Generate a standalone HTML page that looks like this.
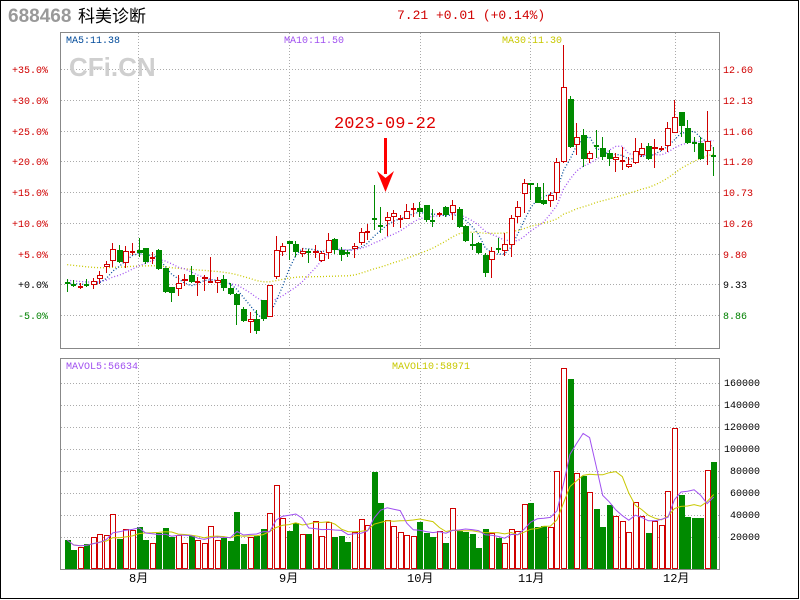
<!DOCTYPE html>
<html><head><meta charset="utf-8"><style>
html,body{margin:0;padding:0;background:#fff;}
#w{position:relative;width:800px;height:600px;overflow:hidden;}
svg{position:absolute;left:0;top:0;}
text{font-family:"Liberation Mono",monospace;}
</style></head><body><div id="w">
<svg id="s" width="800" height="600" xmlns="http://www.w3.org/2000/svg">
<rect x="0.5" y="0.5" width="798" height="598" fill="#fff" stroke="#000"/>
<text x="8" y="22" font-size="19" font-weight="bold" fill="#999" style="font-family:'Liberation Sans',sans-serif">688468</text>
<text x="78" y="22" font-size="17" fill="#000" style="font-family:'Liberation Sans','Noto Sans CJK SC',sans-serif">科美诊断</text>
<text x="397" y="19" font-size="13" fill="#d00000">7.21 +0.01 (+0.14%)</text>
<g id="grid"></g>
<rect x="60.5" y="32.5" width="659" height="316" fill="none" stroke="#888"/>
<rect x="60.5" y="358.5" width="659" height="211" fill="none" stroke="#888"/>
<text x="69" y="76" font-size="26" font-weight="bold" fill="#cfcfcf" style="font-family:'Liberation Sans',sans-serif">CFi.CN</text>
<text x="66" y="43" font-size="10" fill="#004a9a">MA5:11.38</text>
<text x="284" y="43" font-size="10" fill="#a050f0">MA10:11.50</text>
<text x="502" y="43" font-size="10" fill="#c8c800">MA30:11.30</text>
<text x="66" y="369" font-size="10" fill="#a050f0">MAVOL5:56634</text>
<text x="392" y="369" font-size="10" fill="#c8c800">MAVOL10:58971</text>
<g id="lab" font-size="10"></g>
<g id="ma"></g>
<g id="cd"></g>
<g id="vol"></g>
<text x="334" y="128" font-size="17" fill="#e00000">2023-09-22</text>
<rect x="384" y="138" width="3" height="36" fill="#f00"/>
<polygon points="377,171 385.5,192 394,171 385.5,178" fill="#f00"/>
<g font-size="12" fill="#000" style="font-family:'Liberation Sans','Noto Sans CJK SC',sans-serif">
<text x="129" y="582">8月</text><text x="279" y="582">9月</text><text x="407" y="582">10月</text><text x="518" y="582">11月</text><text x="663" y="582">12月</text>
</g>
</svg></div>
<script>
function add(g,h){document.getElementById(g).innerHTML+=h;}
var g="",hy=[69,100,131,161,192,223,254,284,315],vy=[383,405,427,449,471,493,515,537],vx=[138,289,420,530,675];
hy.forEach(function(y){g+='<line x1="61" x2="719" y1="'+(y+.5)+'" y2="'+(y+.5)+'" stroke="#aaa" stroke-dasharray="1,2"/>';});
vy.forEach(function(y){g+='<line x1="61" x2="719" y1="'+(y+.5)+'" y2="'+(y+.5)+'" stroke="#aaa" stroke-dasharray="1,2"/>';});
vx.forEach(function(x){g+='<line x1="'+(x+.5)+'" x2="'+(x+.5)+'" y1="33" y2="348" stroke="#aaa" stroke-dasharray="1,2"/><line x1="'+(x+.5)+'" x2="'+(x+.5)+'" y1="359" y2="569" stroke="#aaa" stroke-dasharray="1,2"/>';});
add("grid",g);
var L="",pl=["+35.0%","+30.0%","+25.0%","+20.0%","+15.0%","+10.0%","+5.0%","+0.0%","-5.0%"],pr=["12.60","12.13","11.66","11.20","10.73","10.26","9.80","9.33","8.86"];
hy.forEach(function(y,i){var c=i<7?"#d00000":(i==7?"#000":"#008000");
L+='<text x="48" y="'+(y+4)+'" text-anchor="end" fill="'+c+'">'+pl[i]+'</text><text x="723" y="'+(y+4)+'" fill="'+c+'">'+pr[i]+'</text>';});
var vl=["160000","140000","120000","100000","80000","60000","40000","20000"];
vy.forEach(function(y,i){L+='<text x="760" y="'+(y+3)+'" text-anchor="end" fill="#000">'+vl[i]+'</text>';});
add("lab",L);
var A=[["g",246,250,238,275],["g",252,256,240,262],["r",258,262,250,266],["g",252,256,238,262],["r",243,256,235,267],["r",226,238,212,252],["r",193,202,183,220],["r",148,182,128,202],["g",150,185,135,188],["r",154,188,138,205],["r",152,154,130,165],["g",150,160,115,170],["g",144,185,144,192],["r",171,173,155,192],["g",150,206,148,210],["g",205,275,205,278],["g",262,278,262,305],["r",250,268,225,288],["r",237,244,222,258],["g",225,246,198,250],["r",244,246,230,288],["r",230,236,225,272],["r",242,246,170,250],["r",240,250,232,278],["g",237,263,224,272],["g",263,282,250,285],["g",282,315,280,375],["g",328,362,322,365],["r",357,365,335,398],["g",357,392,330,402],["g",300,356,300,362],["r",256,350,256,352],["r",150,230,108,238],["r",138,155,128,168],["g",124,132,124,180],["g",132,155,124,170],["r",153,162,145,172],["g",154,156,148,190],["r",153,158,135,175],["r",160,182,153,185],["r",121,160,100,177],["g",117,150,113,162],["g",150,164,142,182],["g",157,159,150,170],["r",138,148,130,175],["r",96,130,85,135],["r",92,94,72,120],["g",55,57,-45,90],["g",74,76,20,98],["r",52,62,35,108],["r",40,50,30,82],["r",54,58,45,85]];
var B=[["r",452,476,432,478],["r",444,446,428,470],["g",445,455,425,470],["g",435,480,435,485],["g",479,481,448,500],["r",458,462,455,470],["g",440,465,438,470],["r",436,458,420,480],["g",446,500,440,505],["g",498,542,495,545],["g",552,558,520,570],["g",548,578,545,582],["g",585,638,580,652],["r",572,600,560,655],["g",565,567,535,580],["r",553,573,520,588],["r",475,555,465,590],["r",442,472,422,490],["r",368,403,358,460],["g",368,376,368,420],["g",380,428,368,428],["g",420,433,370,435],["r",406,422,395,440],["r",307,400,295,420],["r",82,307,-45,310],["g",118,260,108,265],["r",232,256,190,285],["g",226,298,208,320],["r",280,297,272,308],["g",256,258,210,293],["g",265,290,230,300],["g",280,296,270,318],["r",290,300,280,335],["r",299,301,260,330],["r",313,320,290,325],["r",273,310,235,312],["r",265,285,250,290],["g",258,296,250,300],["r",262,268,238,325],["r",264,266,258,272],["r",205,258,185,275],["r",170,218,120,220],["g",157,197,157,230],["g",205,248,180,252],["g",247,249,232,275],["g",250,297,232,300],["r",243,273,152,316],["g",285,287,262,347]];
var C=[];
A.forEach(function(a){C.push([a[0],200+a[1]/3,200+a[2]/3,200+a[3]/3,200+a[4]/3]);});
B.forEach(function(a){C.push([a[0],60+a[1]/3,60+a[2]/3,60+a[3]/3,60+a[4]/3]);});
var h="",cl=[];
C.forEach(function(c,i){var x=Math.round(66.7+6.53*i),col=c[0]=="r"?"#d00000":"#008a00";
var bt=Math.round(c[1]),bb=Math.round(c[2]),wt=Math.round(c[3]),wb=Math.round(c[4]);
cl.push(c[0]=="r"?c[1]:c[2]);
h+='<line x1="'+(x+.5)+'" x2="'+(x+.5)+'" y1="'+wt+'" y2="'+wb+'" stroke="'+col+'"/>';
if(bb-bt<=1){h+='<rect x="'+(x-2)+'" y="'+bt+'" width="5" height="2" fill="'+col+'"/>';}
else if(c[0]=="r"){h+='<rect x="'+(x-2+.5)+'" y="'+(bt+.5)+'" width="5" height="'+(bb-bt-1)+'" fill="#fff" stroke="'+col+'"/>';}
else{h+='<rect x="'+(x-2)+'" y="'+bt+'" width="6" height="'+(bb-bt)+'" fill="'+col+'"/>';}
});
function ma(arr,n,pad){var r=[];for(var i=0;i<arr.length;i++){var s=0;for(var k=i-n+1;k<=i;k++)s+=(k<0?pad:arr[k]);r.push(s/n);}return r;}
function pl2(r,col,dash){var p=r.map(function(v,i){return (66.7+6.53*i+.5).toFixed(1)+","+v.toFixed(1);}).join(" ");
return '<polyline points="'+p+'" fill="none" stroke="'+col+'" stroke-width="1.3" '+(dash?'stroke-dasharray="1,2"':'')+'/>';}
var m="";
m+=pl2(ma(cl,30,264),"#c8c800",1);
m+=pl2(ma(cl,10,280),"#a050f0",1);
m+=pl2(ma(cl,5,283),"#004a9a",1);
add("ma",m);
add("cd",h);
var V1=[600,630,622,612,590,582,586,522,597,568,570,561,600,610,578,564,591,586,610,588,600,610,559,601,594,603,516,612,592,588,567,520,436,535,573,550,583,582,544,589,545,591,588,606,576,538,556,396,490,541,558,576];
var V2=[586,589,545,578,591,574,608,504,572,576,582,624,567,578,594,610,568,574,492,489,562,558,562,394,85,117,400,407,457,507,561,494,528,544,577,487,528,578,543,555,453,264,465,531,534,534,391,366];
var VT=V1.concat(V2).map(function(t){return 340+t/3;});
var v="",vv=[];
VT.forEach(function(t,i){var x=Math.round(66.7+6.53*i),col=C[i][0]=="r"?"#d00000":"#008a00";t=Math.round(t);vv.push(t);
if(C[i][0]=="r")v+='<rect x="'+(x-2+.5)+'" y="'+(t+.5)+'" width="5" height="'+(569-t-1)+'" fill="#fff" stroke="'+col+'"/>';
else v+='<rect x="'+(x-2)+'" y="'+t+'" width="6" height="'+(569-t)+'" fill="'+col+'"/>';});
function mv(n){var r=[];for(var i=0;i<vv.length;i++){var s=0,c=0;for(var k=Math.max(0,i-n+1);k<=i;k++){s+=569-vv[k];c++;}r.push(569-s/c);}return r;}
v+=pl2(mv(10),"#c8c800",0).replace('stroke-width="1.3"','stroke-width="1"');
v+=pl2(mv(5),"#a050f0",0).replace('stroke-width="1.3"','stroke-width="1"');
add("vol",v);
</script>
</body></html>
